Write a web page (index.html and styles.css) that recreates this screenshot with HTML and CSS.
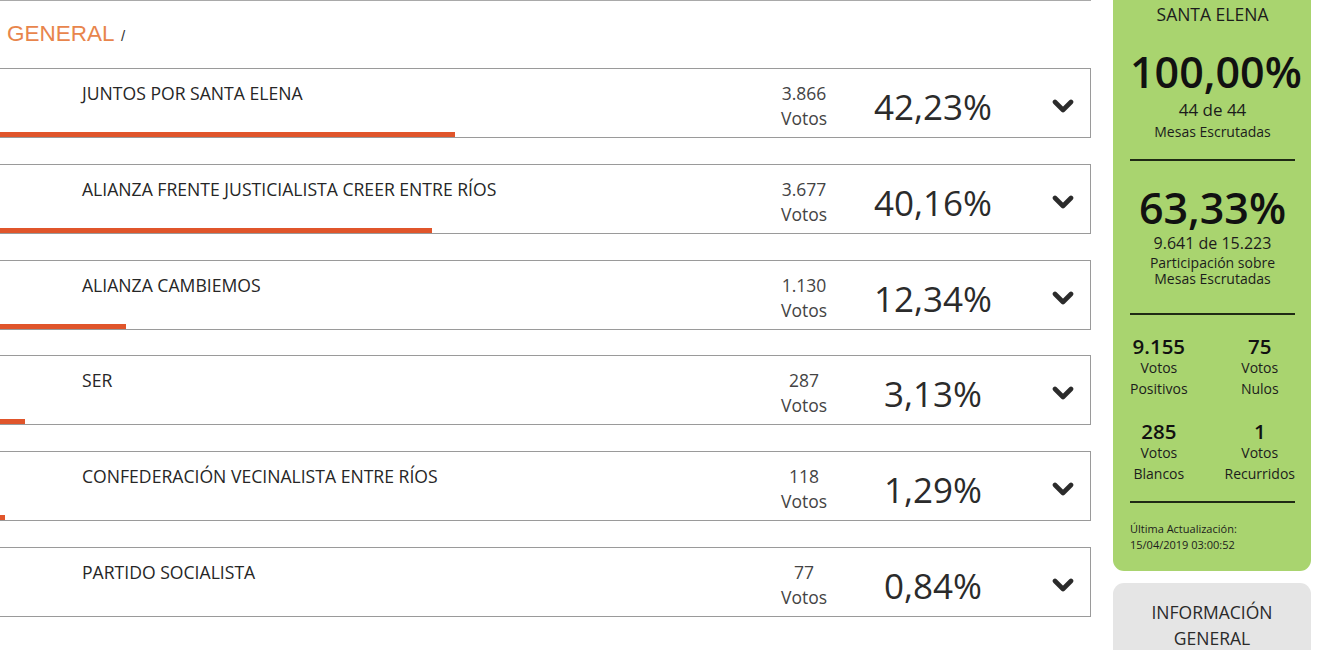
FILE: index.html
```html
<!DOCTYPE html>
<html lang="es">
<head>
<meta charset="utf-8">
<title>Resultados - Santa Elena</title>
<link rel="stylesheet" href="styles.css">
</head>
<body>
<div class="page">
  <main class="main">
    <div class="crumbs"><span class="crumb-main">GENERAL</span> <span class="crumb-sep">/</span></div>
    <div class="list">
      <div class="row">
        <div class="row-body">
          <div class="name">JUNTOS POR SANTA ELENA</div>
          <div class="votes">3.866<br>Votos</div>
          <div class="pct">42,23%</div>
          <div class="chev"><svg viewBox="0 0 22 14" width="22" height="14"><path d="M3 3 L11 11 L19 3" fill="none" stroke="#2b2b2b" stroke-width="4.6" stroke-linecap="round" stroke-linejoin="round"/></svg></div>
        </div>
        <div class="bar" style="width:455px"></div>
      </div>
      <div class="row">
        <div class="row-body">
          <div class="name">ALIANZA FRENTE JUSTICIALISTA CREER ENTRE RÍOS</div>
          <div class="votes">3.677<br>Votos</div>
          <div class="pct">40,16%</div>
          <div class="chev"><svg viewBox="0 0 22 14" width="22" height="14"><path d="M3 3 L11 11 L19 3" fill="none" stroke="#2b2b2b" stroke-width="4.6" stroke-linecap="round" stroke-linejoin="round"/></svg></div>
        </div>
        <div class="bar" style="width:432px"></div>
      </div>
      <div class="row">
        <div class="row-body">
          <div class="name">ALIANZA CAMBIEMOS</div>
          <div class="votes">1.130<br>Votos</div>
          <div class="pct">12,34%</div>
          <div class="chev"><svg viewBox="0 0 22 14" width="22" height="14"><path d="M3 3 L11 11 L19 3" fill="none" stroke="#2b2b2b" stroke-width="4.6" stroke-linecap="round" stroke-linejoin="round"/></svg></div>
        </div>
        <div class="bar" style="width:126px"></div>
      </div>
      <div class="row">
        <div class="row-body">
          <div class="name">SER</div>
          <div class="votes">287<br>Votos</div>
          <div class="pct">3,13%</div>
          <div class="chev"><svg viewBox="0 0 22 14" width="22" height="14"><path d="M3 3 L11 11 L19 3" fill="none" stroke="#2b2b2b" stroke-width="4.6" stroke-linecap="round" stroke-linejoin="round"/></svg></div>
        </div>
        <div class="bar" style="width:25px"></div>
      </div>
      <div class="row">
        <div class="row-body">
          <div class="name">CONFEDERACIÓN VECINALISTA ENTRE RÍOS</div>
          <div class="votes">118<br>Votos</div>
          <div class="pct">1,29%</div>
          <div class="chev"><svg viewBox="0 0 22 14" width="22" height="14"><path d="M3 3 L11 11 L19 3" fill="none" stroke="#2b2b2b" stroke-width="4.6" stroke-linecap="round" stroke-linejoin="round"/></svg></div>
        </div>
        <div class="bar" style="width:5px"></div>
      </div>
      <div class="row">
        <div class="row-body">
          <div class="name">PARTIDO SOCIALISTA</div>
          <div class="votes">77<br>Votos</div>
          <div class="pct">0,84%</div>
          <div class="chev"><svg viewBox="0 0 22 14" width="22" height="14"><path d="M3 3 L11 11 L19 3" fill="none" stroke="#2b2b2b" stroke-width="4.6" stroke-linecap="round" stroke-linejoin="round"/></svg></div>
        </div>
        <div class="bar" style="width:0px"></div>
      </div>
    </div>
  </main>
  <aside class="side">
    <div class="summary">
      <div class="place">SANTA ELENA</div>
      <div class="big big-first">100,00%</div>
      <div class="sub-lg">44 de 44</div>
      <div class="sub sub-tall">Mesas Escrutadas</div>
      <hr class="divider divider-1">
      <div class="big big-second">63,33%</div>
      <div class="sub-md">9.641 de 15.223</div>
      <div class="sub sub-pair">Participación sobre<br>Mesas Escrutadas</div>
      <hr class="divider divider-2">
      <div class="stats">
        <div class="stat"><b>9.155</b><span>Votos<br>Positivos</span></div>
        <div class="stat"><b>75</b><span>Votos<br>Nulos</span></div>
        <div class="stat"><b>285</b><span>Votos<br>Blancos</span></div>
        <div class="stat"><b>1</b><span>Votos<br>Recurridos</span></div>
      </div>
      <hr class="divider divider-3">
      <div class="updated">Última Actualización:<br>15/04/2019 03:00:52</div>
    </div>
    <div class="info">INFORMACIÓN<br>GENERAL</div>
  </aside>
</div>
</body>
</html>
```
FILE: styles.css
```css
* { box-sizing: border-box; }
html, body { margin: 0; padding: 0; background: #fff; }
body { font-family: "Open Sans", "Liberation Sans", sans-serif; color: #333; overflow: hidden; }

.page {
  display: flex;
  align-items: flex-start;
  gap: 22px;
  width: 1318px;
}

.main {
  width: 1091px;
  flex: none;
  border-top: 1px solid #a9a9a9;
}

.crumbs {
  font-family: "Liberation Sans", Arial, sans-serif;
  padding: 20px 0 0 7px;
  height: 67px;
  line-height: 26px;
}
.crumb-main { color: #e8854c; font-size: 22.5px; }
.crumb-sep { color: #333; font-size: 15px; margin-left: 2px; }

.list { display: flex; flex-direction: column; gap: 25.8px; }

.row {
  height: 70px;
  border: 1px solid #9a9a9a;
  border-left: none;
  display: flex;
  flex-direction: column;
}
.row-body {
  flex: 1;
  display: grid;
  grid-template-columns: 1fr 80px 178px 68px;
}
.bar {
  height: 5px;
  background: #e0552b;
  flex: none;
}

.name {
  padding: 12px 0 0 82px;
  font-size: 17.6px;
  line-height: 24px;
  color: #262626;
}
.votes {
  padding-top: 12px;
  text-align: center;
  font-size: 17.5px;
  line-height: 25px;
  color: #444;
}
.pct {
  padding-top: 18px;
  text-align: center;
  font-size: 35px;
  line-height: 40px;
  color: #2b2b2b;
}
.chev {
  display: flex;
  justify-content: flex-end;
  padding: 30px 16px 0 0;
}
.chev svg { display: block; }

.side { width: 198px; flex: none; }

.summary {
  background: #a9d46f;
  border-radius: 0 0 11px 11px;
  padding: 2px 16px 18px 17px;
  text-align: center;
  color: #1c1c1c;
}
.place { font-size: 17.5px; line-height: 24px; }
.big { font-size: 43px; font-weight: 600; line-height: 50px; color: #111; }
.big-first { margin-top: 21px; }
.big-second { margin-top: 22px; }
.sub-lg { font-size: 17px; line-height: 22px; margin-top: 2px; }
.sub { font-size: 14px; line-height: 16px; }
.sub-tall { line-height: 22px; }
.sub-md { font-size: 16px; line-height: 20px; }
.sub-pair { margin-top: 2px; }
.divider {
  border: none;
  border-top: 2px solid #1f2a14;
  margin: 16px 0 0;
  height: 0;
}
.divider-2 { margin-top: 26px; }
.stats {
  display: grid;
  grid-template-columns: auto auto;
  justify-content: space-between;
  row-gap: 21px;
  margin-top: 20px;
  font-size: 14px;
  line-height: 21px;
}
.stat { display: flex; flex-direction: column; align-items: center; }
.stat b { font-size: 20.5px; font-weight: 600; line-height: 22px; color: #111; }
.divider-3 { margin-top: 17px; }
.updated {
  text-align: left;
  font-size: 11px;
  line-height: 16px;
  margin-top: 18px;
}

.info {
  margin-top: 12px;
  background: #e5e5e5;
  border-radius: 11px;
  padding: 16px 10px 20px;
  text-align: center;
  font-size: 17.5px;
  line-height: 26px;
  color: #2a2a2a;
}
```
